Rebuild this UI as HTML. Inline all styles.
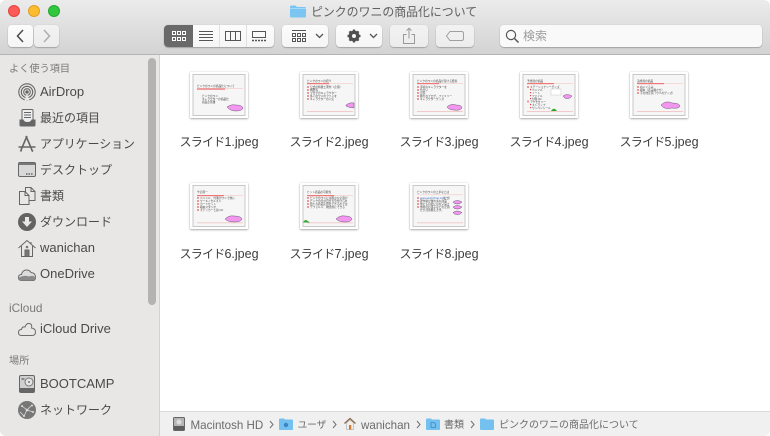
<!DOCTYPE html>
<html lang="ja"><head><meta charset="utf-8"><title>ピンクのワニの商品化について</title>
<style>
html,body{margin:0;padding:0;width:770px;height:436px;overflow:hidden;background:#fff}
*{box-sizing:border-box}
body{font-family:"Liberation Sans","Noto Sans CJK JP",sans-serif;position:relative}
#win{position:absolute;inset:0;border-radius:6px;overflow:hidden;background:#fff;filter:blur(.35px)}
#bar{position:absolute;left:0;top:0;width:770px;height:55px;background:linear-gradient(#ebebeb,#d3d3d3);border-bottom:1px solid #b4b4b4}
.abs{position:absolute}
.t{position:absolute;white-space:nowrap;line-height:16px}
.btn{position:absolute;top:25px;height:22px;background:linear-gradient(#fcfcfc,#f5f5f5);border-radius:4px;box-shadow:0 1px 1px rgba(0,0,0,.22),0 0 0 .5px rgba(0,0,0,.05)}
.dim{background:linear-gradient(#f2f2f2,#ececec)}
svg{position:absolute;overflow:visible}
#side{position:absolute;left:0;top:55px;width:160px;height:381px;background:#e8e7e6;border-right:1px solid #d2d2d2}
.s{position:absolute;left:40px;white-space:nowrap;color:#4a4a4a;font-size:13px;line-height:16px}
.k{font-size:12px}
.h{position:absolute;left:9px;color:#7a7a7a;font-size:10.2px;line-height:14px;white-space:nowrap}
#scroll{position:absolute;left:148px;top:58px;width:8px;height:247px;background:#b3b3b3;border-radius:4px}
#path{position:absolute;left:160px;top:411px;width:610px;height:25px;background:#f0f0f0;border-top:1px solid #d9d9d9}
.p{position:absolute;top:418px;line-height:13px;font-size:11.6px;color:#6b6b6b;white-space:nowrap}
.thumb{position:absolute;width:58px;height:46px;background:#fff;box-shadow:0 1px 2px rgba(0,0,0,.3),0 0 1px rgba(0,0,0,.2)}
.thumb svg{left:0;top:0;width:58px;height:46px;filter:blur(.25px)}
.l{position:absolute;width:110px;text-align:center;font-size:12.5px;color:#3c3c3c;line-height:16px;white-space:nowrap}
.l span{font-size:12px;letter-spacing:-.75px}
.tt{font-size:2.7px;fill:#444;font-family:"Noto Sans CJK JP",sans-serif}
.c{fill:#f296f0;stroke:#445;stroke-width:.4}
</style></head><body>
<div id="win">
<div id="bar"></div>
<!-- traffic lights -->
<div class="abs" style="left:8px;top:5px;width:12px;height:12px;border-radius:50%;background:#fc5b57;border:.5px solid #e2463f"></div>
<div class="abs" style="left:28px;top:5px;width:12px;height:12px;border-radius:50%;background:#fdbb2e;border:.5px solid #dfa023"></div>
<div class="abs" style="left:48px;top:5px;width:12px;height:12px;border-radius:50%;background:#30c73f;border:.5px solid #24a830"></div>
<!-- title -->
<svg style="left:290px;top:5px" width="16" height="13" viewBox="0 0 16 13"><path d="M0 2 Q0 .5 1.5 .5H5.5L7 2H14.5Q16 2 16 3.5V11.5Q16 12.5 15 12.5H1Q0 12.5 0 11.5Z" fill="#7ac5f2"/><rect y="3" width="16" height="1" fill="#a5dbf8"/></svg>
<div class="t" style="left:311px;top:4px;font-size:11.9px;color:#5f5f5f">ピンクのワニの商品化について</div>
<!-- nav -->
<div class="btn" style="left:8px;width:25px"></div>
<div class="btn dim" style="left:34px;width:25px"></div>
<svg style="left:8px;top:25px" width="25" height="22"><path d="M15 5 L9.5 11 L15 17" fill="none" stroke="#4a4a4a" stroke-width="1.5"/></svg>
<svg style="left:34px;top:25px" width="25" height="22"><path d="M10 5 L15.5 11 L10 17" fill="none" stroke="#aeaeae" stroke-width="1.5"/></svg>
<!-- view seg -->
<div class="btn" style="left:164px;width:110px"></div>
<div class="abs" style="left:164px;top:25px;width:29px;height:22px;background:#696969;border-radius:4px 0 0 4px"></div>
<div class="abs" style="left:219px;top:25px;width:1px;height:22px;background:#e0e0e0"></div>
<div class="abs" style="left:246px;top:25px;width:1px;height:22px;background:#e0e0e0"></div>
<svg style="left:172px;top:31px" width="14" height="11" fill="none" stroke="#fff" stroke-width="1"><rect x=".5" y=".5" width="3" height="3"/><rect x="5.5" y=".5" width="3" height="3"/><rect x="10.5" y=".5" width="3" height="3"/><rect x=".5" y="6.5" width="3" height="3"/><rect x="5.5" y="6.5" width="3" height="3"/><rect x="10.5" y="6.5" width="3" height="3"/></svg>
<svg style="left:199px;top:31px" width="14" height="11" stroke="#555" stroke-width="1"><path d="M0 .5H14M0 3.5H14M0 6.5H14M0 9.5H14"/></svg>
<svg style="left:225px;top:31px" width="16" height="11" fill="none" stroke="#555" stroke-width="1"><rect x=".5" y=".5" width="15" height="9"/><path d="M5.5 .5V9.5M10.5 .5V9.5"/></svg>
<svg style="left:252px;top:31px" width="15" height="11" fill="none" stroke="#555" stroke-width="1"><rect x=".5" y=".5" width="13" height="6"/><path d="M0 9.5H14" stroke-dasharray="2 1" stroke-width="1.5"/></svg>
<!-- arrange -->
<div class="btn" style="left:282px;width:46px"></div>
<svg style="left:292px;top:30px" width="14" height="13" fill="none" stroke="#555" stroke-width="1"><path d="M0 .5H14"/><rect x=".5" y="3.5" width="3" height="3"/><rect x="5.5" y="3.5" width="3" height="3"/><rect x="10.5" y="3.5" width="3" height="3"/><rect x=".5" y="8.5" width="3" height="3"/><rect x="5.5" y="8.5" width="3" height="3"/><rect x="10.5" y="8.5" width="3" height="3"/></svg>
<svg style="left:315px;top:33px" width="9" height="6"><path d="M1 1 L4.5 4.5 L8 1" fill="none" stroke="#555" stroke-width="1.3"/></svg>
<!-- action -->
<div class="btn" style="left:336px;width:46px"></div>
<svg style="left:346px;top:28px" width="16" height="16" viewBox="0 0 16 16"><circle cx="8" cy="8" r="4.2" fill="none" stroke="#505050" stroke-width="2.6"/><path d="M8 1.5V14.5M1.5 8H14.5M3.4 3.4L12.6 12.6M12.6 3.4L3.4 12.6" stroke="#505050" stroke-width="2.2"/><circle cx="8" cy="8" r="2" fill="#f8f8f8"/></svg>
<svg style="left:369px;top:33px" width="9" height="6"><path d="M1 1 L4.5 4.5 L8 1" fill="none" stroke="#555" stroke-width="1.3"/></svg>
<!-- share -->
<div class="btn dim" style="left:390px;width:38px"></div>
<svg style="left:403px;top:27px" width="12" height="18"><path d="M3.5 7.5H.5V16.5H11.5V7.5H8.5M6 11.5V1.5M3.5 3.7L6 1.2L8.5 3.7" fill="none" stroke="#999" stroke-width="1"/></svg>
<!-- tag -->
<div class="btn dim" style="left:436px;width:38px"></div>
<svg style="left:446px;top:31px" width="18" height="10"><path d="M4 .5H15.5Q17.5 .5 17.5 2.5V7.5Q17.5 9.5 15.5 9.5H4L.5 5Z" fill="none" stroke="#9f9f9f" stroke-width="1"/></svg>
<!-- search -->
<div class="btn" style="left:500px;width:262px;background:#f9f9f9"></div>
<svg style="left:505px;top:29px" width="15" height="15"><circle cx="6" cy="6" r="4.6" fill="none" stroke="#555" stroke-width="1.2"/><path d="M9.5 9.5L13.5 13.5" stroke="#555" stroke-width="1.5"/></svg>
<div class="t" style="left:523px;top:28px;font-size:12px;color:#9c9c9c">検索</div>

<!-- sidebar -->
<div id="side"></div><div id="scroll"></div>
<div class="h" style="top:63px">よく使う項目</div>
<div class="h" style="top:301px;font-size:11.8px">iCloud</div>
<div class="h" style="top:355px">場所</div>
<div class="s" style="top:84px">AirDrop</div>
<div class="s k" style="top:110px">最近の項目</div>
<div class="s k" style="top:136px;font-size:11.9px">アプリケーション</div>
<div class="s k" style="top:162px">デスクトップ</div>
<div class="s k" style="top:188px">書類</div>
<div class="s k" style="top:214px">ダウンロード</div>
<div class="s" style="top:240px">wanichan</div>
<div class="s" style="top:266px">OneDrive</div>
<div class="s" style="top:321px">iCloud Drive</div>
<div class="s" style="top:376px">BOOTCAMP</div>
<div class="s k" style="top:402px">ネットワーク</div>
<!-- side icons -->
<svg style="left:18px;top:83px" width="18" height="18" fill="none" stroke="#666" stroke-width="1.1"><circle cx="9" cy="9" r="8.2"/><circle cx="9" cy="9" r="5.7"/><circle cx="9" cy="9" r="3.3"/><circle cx="9" cy="9" r="1.2" fill="#666"/><path d="M6.5 17.5L9 10L11.5 17.5" fill="#e8e7e6" stroke="none"/></svg>
<svg style="left:19px;top:109px" width="17" height="18"><rect x="3" y=".5" width="11" height="13" rx="1" fill="#eee" stroke="#666"/><path d="M5 3.5H12M5 6H12M5 8.5H12" stroke="#666"/><path d="M.5 10.5H4.5Q5 13 8.5 13T12.5 10.5H16.5V16Q16.5 17.5 15 17.5H2Q.5 17.5 .5 16Z" fill="#666"/></svg>
<svg style="left:18px;top:135px" width="18" height="18" fill="none" stroke="#666" stroke-width="1.6"><path d="M9 1L3 15M8 1L14 15M.5 12H17.5M3.5 16.5L2.5 15M13.5 15L15 16.5"/></svg>
<svg style="left:18px;top:162px" width="18" height="16"><rect x=".5" y=".5" width="17" height="14" rx="1.5" fill="#d8d8d8" stroke="#666"/><rect x="1" y="1" width="16" height="2" fill="#777"/><path d="M8 12H15" stroke="#666" stroke-dasharray="1.5 1" stroke-width="1.5"/></svg>
<svg style="left:19px;top:187px" width="17" height="18" fill="#e8e7e6" stroke="#666" stroke-width="1"><path d="M6.5 .5H12L16 4.5V13.5H6.5Z"/><path d="M.5 4.5H6L10 8.5V17.5H.5Z"/><path d="M12 .5V4.5H16M6 4.5V8.5H10" fill="none"/></svg>
<svg style="left:18px;top:213px" width="18" height="18"><circle cx="9" cy="9" r="9" fill="#636363"/><path d="M7 4H11V8.5H14L9 14L4 8.5H7Z" fill="#e8e7e6"/></svg>
<svg style="left:18px;top:239px" width="18" height="18" fill="none" stroke="#666" stroke-width="1"><path d="M.5 9L9 1.5L17.5 9M3.5 7V17.5H14.5V7M13 3V5"/><rect x="7" y="11" width="4" height="6.5" fill="#777"/><circle cx="9" cy="8" r="1.3" fill="#777" stroke="none"/></svg>
<svg style="left:18px;top:267px" width="18" height="14"><path d="M3.5 13.5Q.5 13.5 .5 10.5T3.5 7.5Q4.5 3 8.5 3Q11.5 3 13 5.5Q17.5 6 17.5 10T14 13.5Z" fill="#dcdcdc" stroke="#6a6a6a"/><path d="M3.5 13.5Q.5 13.5 1 10.5Q6 7.5 11 9.5Q15 8 17 10Q17 13.5 14 13.5Z" fill="#8a8a8a"/></svg>
<svg style="left:18px;top:322px" width="18" height="14"><path d="M3.5 13.5Q.5 13.5 .5 10.5T3.5 7.5Q4 4.5 7 5Q8.5 .8 11.5 1.5T13.5 6Q17.5 6.5 17.5 10T14 13.5Z" fill="none" stroke="#6a6a6a"/></svg>
<svg style="left:19px;top:375px" width="16" height="18"><rect x=".5" y=".5" width="15" height="17" rx="1.5" fill="#d0d0d0" stroke="#666"/><circle cx="10" cy="7" r="4" fill="#e5e5e5" stroke="#777"/><circle cx="10" cy="7" r="1" fill="#777"/><rect x="1" y="13" width="14" height="4" fill="#666"/><rect x="2.5" y="3" width="3" height="2" fill="#888"/></svg>
<svg style="left:18px;top:401px" width="18" height="18"><circle cx="9" cy="9" r="9" fill="#777"/><path d="M4 5L9 9L14 4M9 9L6 15M9 9L15 11M2 11L6 15" stroke="#ddd" stroke-width=".8" fill="none"/><circle cx="9" cy="9" r="1.3" fill="#ddd"/><circle cx="14" cy="4.500" r="1" fill="#ddd"/><circle cx="4" cy="5" r="1" fill="#ddd"/><circle cx="15" cy="11" r="1" fill="#ddd"/><circle cx="6" cy="15" r="1" fill="#ddd"/></svg>

<!-- thumbs -->
<div class="thumb" style="left:190px;top:72px"><svg viewBox="0 0 58 46"><rect x="3" y="2.500" width="52" height="41" fill="#f6f6f6" stroke="#c8c8c8"/><text class="tt" x="7" y="15">ピンクのワニの商品化について</text><rect x="7" y="16" width="28" height="2" fill="#ee9e9e"/><rect x="35" y="16" width="18" height=".6" fill="#f3c6c6"/><text class="tt" x="12" y="25">ピンクのワニ</text><text class="tt" x="12" y="28">キャラクターの商品化</text><text class="tt" x="12" y="31">商品企画書</text><path class="c" d="M37 35Q41 32 46 33Q52 33 53 36Q52 39 46 39Q40 39 37 35Z"/></svg></div>

<div class="thumb" style="left:300px;top:72px"><svg viewBox="0 0 58 46"><rect x="3" y="2.500" width="52" height="41" fill="#f6f6f6" stroke="#c8c8c8"/><text class="tt" x="7" y="10">ピンクのワニの紹介</text><rect x="7" y="11" width="22" height="1.200" fill="#e77"/><rect x="29" y="11" width="24" height=".6" fill="#f3c6c6"/><g fill="#e99"><rect x="7" y="14" width="2" height="2"/><rect x="7" y="17" width="2" height="2"/><rect x="7" y="20" width="2" height="2"/><rect x="7" y="23" width="2" height="2"/><rect x="7" y="26" width="2" height="2"/></g><text class="tt" x="10" y="16">公式の特徴と著作（企画）</text><text class="tt" x="10" y="19">概要等</text><text class="tt" x="10" y="22">ブログのキャラクター</text><text class="tt" x="10" y="25">多くのワニのファンを</text><text class="tt" x="10" y="28">キャラクターの人気</text><rect x="7" y="39" width="46" height=".7" fill="#f0b8b8"/><path class="c" d="M46 33Q50 30 54 31V36Q50 36 46 34Z"/></svg></div>

<div class="thumb" style="left:410px;top:72px"><svg viewBox="0 0 58 46"><rect x="3" y="2.500" width="52" height="41" fill="#f6f6f6" stroke="#c8c8c8"/><text class="tt" x="7" y="10">ピンクのワニの商品が受ける要素</text><rect x="7" y="11" width="22" height="1.200" fill="#e77"/><rect x="29" y="11" width="24" height=".6" fill="#f3c6c6"/><g fill="#e99"><rect x="7" y="14" width="2" height="2"/><rect x="7" y="17" width="2" height="2"/><rect x="7" y="20" width="2" height="2"/><rect x="7" y="23" width="2" height="2"/><rect x="7" y="26" width="2" height="2"/></g><text class="tt" x="10" y="16">手頃なキャラクターを</text><text class="tt" x="10" y="19">色合い</text><text class="tt" x="10" y="22">企画</text><text class="tt" x="10" y="25">魅力なブログ、ファミリー</text><text class="tt" x="10" y="28">キャラクターグッズ</text><rect x="7" y="39" width="46" height=".7" fill="#f0b8b8"/><path class="c" d="M37 35Q41 31 46 33Q52 33 52 36Q50 39 44 38Q39 38 37 35Z"/></svg></div>

<div class="thumb" style="left:520px;top:72px"><svg viewBox="0 0 58 46"><rect x="3" y="2.500" width="52" height="41" fill="#f6f6f6" stroke="#c8c8c8"/><text class="tt" x="7" y="10">予想商の商品</text><rect x="7" y="11" width="27" height="1.200" fill="#e77"/><rect x="34" y="11" width="19" height=".6" fill="#f3c6c6"/><g fill="#d44"><rect x="7" y="14" width="2" height="2" fill="#e99"/><rect x="10" y="17" width="1.200" height="1.200"/><rect x="10" y="20" width="1.200" height="1.200"/><rect x="10" y="23" width="1.200" height="1.200"/><rect x="10" y="26" width="1.200" height="1.200"/><rect x="7" y="28.500" width="2" height="2" fill="#e99"/><rect x="10" y="32" width="1.200" height="1.200"/><rect x="10" y="35" width="1.200" height="1.200"/></g><text class="tt" x="10" y="16">ステーショナリーグッズ</text><text class="tt" x="12" y="19">ペンソル</text><text class="tt" x="12" y="22">ノート</text><text class="tt" x="12" y="25">ファイル</text><text class="tt" x="12" y="28">付箋 etc</text><text class="tt" x="10" y="31">アクセサリー</text><text class="tt" x="12" y="34">ストラップ</text><text class="tt" x="12" y="37">ワッペンシール</text><rect x="31" y="17" width="10" height="6" fill="#fff" stroke="#bbb" stroke-width=".4"/><path class="c" d="M43 24Q47 21 52 24Q50 27 46 26.500Q44 26 43 24Z"/><rect x="7" y="39" width="46" height=".7" fill="#f0b8b8"/><path d="M31 39Q33 36 35 37L37 39Z" fill="#2a2"/></svg></div>

<div class="thumb" style="left:630px;top:72px"><svg viewBox="0 0 58 46"><rect x="3" y="2.500" width="52" height="41" fill="#f6f6f6" stroke="#c8c8c8"/><text class="tt" x="7" y="10">追想商の商品</text><rect x="7" y="11" width="27" height="1.200" fill="#e77"/><rect x="34" y="11" width="19" height=".6" fill="#f3c6c6"/><g fill="#e99"><rect x="7" y="14" width="2" height="2"/><rect x="7" y="17" width="2" height="2"/><rect x="7" y="20" width="2" height="2"/></g><text class="tt" x="10" y="16">ぬいぐるみ</text><text class="tt" x="10" y="19">絵本（読み聞かせ）</text><text class="tt" x="10" y="22">その他企画（ワニのグッズ）</text><path class="c" d="M31 33Q36 28 42 31Q49 31 50 34Q49 37 42 36Q34 38 31 33Z"/><rect x="7" y="39" width="46" height=".7" fill="#f0b8b8"/></svg></div>

<div class="thumb" style="left:190px;top:183px"><svg viewBox="0 0 58 46"><rect x="3" y="2.500" width="52" height="41" fill="#f6f6f6" stroke="#c8c8c8"/><text class="tt" x="7" y="10">今企画一</text><rect x="7" y="12" width="27" height="1.200" fill="#e77"/><rect x="34" y="12" width="19" height=".6" fill="#f3c6c6"/><g fill="#e99"><rect x="7" y="14" width="2" height="2"/><rect x="7" y="17" width="2" height="2"/><rect x="7" y="20" width="2" height="2"/><rect x="7" y="23" width="2" height="2"/><rect x="7" y="26" width="2" height="2"/></g><text class="tt" x="10" y="16">ペンシル、付箋がワニで他に</text><text class="tt" x="10" y="19">ケーキノセルスミ</text><text class="tt" x="10" y="22">カードセット</text><text class="tt" x="10" y="25">絵本スタジオ</text><text class="tt" x="10" y="28">ステッカーと新 etc</text><path class="c" d="M35 36Q39 32 44 33Q51 33 52 36Q51 39 44 39Q38 39 35 36Z"/><rect x="7" y="39.500" width="46" height=".7" fill="#f0b8b8"/></svg></div>

<div class="thumb" style="left:300px;top:183px"><svg viewBox="0 0 58 46"><rect x="3" y="2.500" width="52" height="41" fill="#f6f6f6" stroke="#c8c8c8"/><text class="tt" x="7" y="10">ヒット商品の可能性</text><rect x="7" y="12" width="27" height="1.200" fill="#e77"/><rect x="34" y="12" width="19" height=".6" fill="#f3c6c6"/><g fill="#e99"><rect x="7" y="14" width="2" height="2"/><rect x="7" y="17" width="2" height="2"/><rect x="7" y="20" width="2" height="2"/><rect x="7" y="23" width="2" height="2"/></g><text class="tt" x="10" y="16">ピンクのワニには確かな企画が</text><text class="tt" x="10" y="19">ピンクの色が目立ち見分けられ</text><text class="tt" x="10" y="22">新たな商品企画をできるのでは</text><text class="tt" x="10" y="25">デフォルメ、物語性にできる</text><path class="c" d="M36 36Q40 32 45 33Q51 33 52 36Q51 39 45 39Q39 39 36 36Z"/><rect x="7" y="39.500" width="46" height=".7" fill="#f0b8b8"/><path d="M3 39.500Q5 36 7 37.500L10 39.500Z" fill="#3a3"/></svg></div>

<div class="thumb" style="left:410px;top:183px"><svg viewBox="0 0 58 46"><rect x="3" y="2.500" width="52" height="41" fill="#f6f6f6" stroke="#c8c8c8"/><text class="tt" x="7" y="10">ピンクのワニの上手なとは</text><rect x="7" y="11.500" width="46" height=".6" fill="#f3c6c6"/><g fill="#e99"><rect x="7" y="14" width="2" height="2"/><rect x="7" y="17" width="2" height="2"/><rect x="7" y="20" width="2" height="2"/><rect x="7" y="23" width="2" height="2"/></g><text class="tt" x="10" y="16" style="fill:#36c">www.wanichan.com</text><text class="tt" x="31" y="16">（公式）</text><text class="tt" x="10" y="19">著作権が優れ素な商品</text><text class="tt" x="10" y="22">他にも自社にはない良さ</text><text class="tt" x="10" y="25">他者のお菓子などの企画</text><text class="tt" x="10" y="28">ぜひ活用願えます。</text><path class="c" d="M43 19Q47 16 52 19Q50 21.500 47 21Q44 21 43 19Z"/><path class="c" d="M43 24Q47 21 52 24Q50 26.500 47 26Q44 26 43 24Z"/><path class="c" d="M43 29.500Q47 26.500 52 29.500Q50 32 47 31.500Q44 31.500 43 29.500Z"/><rect x="7" y="39.500" width="46" height=".7" fill="#f0b8b8"/></svg></div>

<!-- labels -->
<div class="l" style="left:164px;top:134px"><span>スライド</span>1.jpeg</div>
<div class="l" style="left:274px;top:134px"><span>スライド</span>2.jpeg</div>
<div class="l" style="left:384px;top:134px"><span>スライド</span>3.jpeg</div>
<div class="l" style="left:494px;top:134px"><span>スライド</span>4.jpeg</div>
<div class="l" style="left:604px;top:134px"><span>スライド</span>5.jpeg</div>
<div class="l" style="left:164px;top:246px"><span>スライド</span>6.jpeg</div>
<div class="l" style="left:274px;top:246px"><span>スライド</span>7.jpeg</div>
<div class="l" style="left:384px;top:246px"><span>スライド</span>8.jpeg</div>

<!-- path bar -->
<div id="path"></div>
<svg style="left:173px;top:417px" width="12" height="14"><rect x=".5" y=".5" width="11" height="13" rx="1" fill="#b5b5b5" stroke="#666"/><rect x="1" y="9" width="10" height="4" fill="#5c5c5c"/><circle cx="6" cy="5" r="2.500" fill="#ddd"/></svg>
<div class="p" style="left:190.500px;top:419px">Macintosh HD</div>
<svg style="left:269px;top:420px" width="5" height="9"><path d="M1 1L4 4.500L1 8" fill="none" stroke="#777" stroke-width="1.100"/></svg>
<svg style="left:279px;top:418px" width="14" height="12" viewBox="0 0 14 12"><path d="M0 1.500Q0 .5 1 .5H5L6 1.500H13Q14 1.500 14 2.500V11Q14 12 13 12H1Q0 12 0 11Z" fill="#74c0ef"/><circle cx="7" cy="7" r="2.200" fill="#3a86c4"/></svg>
<div class="p" style="left:297.500px;top:419px;font-size:9.7px">ユーザ</div>
<svg style="left:332px;top:420px" width="5" height="9"><path d="M1 1L4 4.500L1 8" fill="none" stroke="#777" stroke-width="1.100"/></svg>
<svg style="left:344px;top:417px" width="12" height="13"><path d="M.5 6.500L6 1.500L11.500 6.500" fill="none" stroke="#8a6a4a" stroke-width="1.300"/><path d="M2.500 6V12.500H9.500V6L6 3Z" fill="#f0efe9" stroke="#999" stroke-width=".5"/><rect x="5" y="8" width="2.200" height="4.500" fill="#d8752d"/></svg>
<div class="p" style="left:361px;top:419px">wanichan</div>
<svg style="left:416px;top:420px" width="5" height="9"><path d="M1 1L4 4.500L1 8" fill="none" stroke="#777" stroke-width="1.100"/></svg>
<svg style="left:426px;top:418px" width="14" height="12" viewBox="0 0 14 12"><path d="M0 1.500Q0 .5 1 .5H5L6 1.500H13Q14 1.500 14 2.500V11Q14 12 13 12H1Q0 12 0 11Z" fill="#74c0ef"/><path d="M5 4.500H8L9.500 6V9.500H5Z" fill="none" stroke="#3a86c4" stroke-width=".8"/></svg>
<div class="p" style="left:444px;top:419px;font-size:10px">書類</div>
<svg style="left:470px;top:420px" width="5" height="9"><path d="M1 1L4 4.500L1 8" fill="none" stroke="#777" stroke-width="1.100"/></svg>
<svg style="left:480px;top:418px" width="14" height="12" viewBox="0 0 14 12"><path d="M0 1.500Q0 .5 1 .5H5L6 1.500H13Q14 1.500 14 2.500V11Q14 12 13 12H1Q0 12 0 11Z" fill="#74c0ef"/></svg>
<div class="p" style="left:499px;top:419px;font-size:10px">ピンクのワニの商品化について</div>
</div>
</body></html>
